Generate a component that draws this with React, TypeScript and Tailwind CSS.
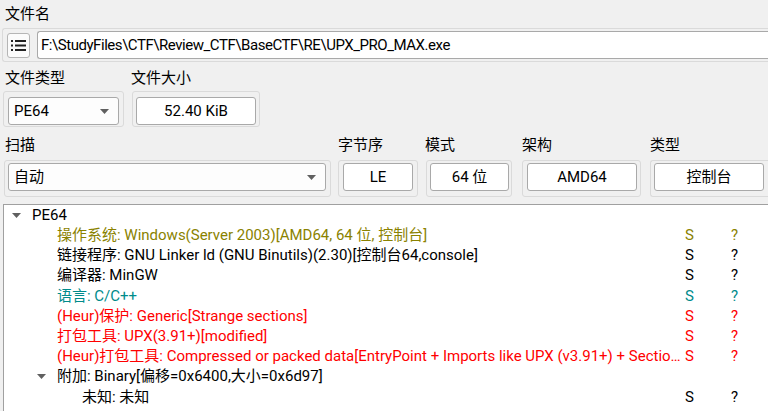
import type { ReactNode } from "react";

const FONT = "font-['Segoe_UI','Roboto','Noto_Sans_CJK_SC',sans-serif]";

function Caret({ className = "" }: { className?: string }) {
  return (
    <svg width="9" height="5" viewBox="0 0 9 5" className={className}>
      <path d="M0 0 L9 0 L4.5 5 Z" fill="#606060" />
    </svg>
  );
}

function Group({ className = "", children }: { className?: string; children: ReactNode }) {
  return (
    <div className={`flex border border-[#dadada] rounded-[3px] shrink-0 ${className}`}>{children}</div>
  );
}

function Field({ className = "", children }: { className?: string; children: ReactNode }) {
  return (
    <div
      className={`flex items-center justify-center bg-white border border-[#a9a9a9] rounded-[3px] h-[28px] text-[15px] text-black ${className}`}
    >
      {children}
    </div>
  );
}

function Combo({ className = "", value }: { className?: string; value: string }) {
  return (
    <div
      className={`flex items-center justify-between bg-[#fdfdfd] border border-[#a9a9a9] rounded-[3px] h-[28px] pl-[5px] pr-[9px] text-[15px] text-black ${className}`}
    >
      <span>{value}</span>
      <Caret />
    </div>
  );
}

type Item = {
  level: 0 | 1 | 2;
  text: string;
  color: string;
  arrow?: boolean;
  flags?: boolean;
};

// the long packer line is shown clipped, as the tree view elides it
const items: Item[] = [
  { level: 0, text: "PE64", color: "text-black", arrow: true },
  { level: 1, text: "操作系统: Windows(Server 2003)[AMD64, 64 位, 控制台]", color: "text-[#8a8200]", flags: true },
  { level: 1, text: "链接程序: GNU Linker ld (GNU Binutils)(2.30)[控制台64,console]", color: "text-black", flags: true },
  { level: 1, text: "编译器: MinGW", color: "text-black", flags: true },
  { level: 1, text: "语言: C/C++", color: "text-[#008b8b]", flags: true },
  { level: 1, text: "(Heur)保护: Generic[Strange sections]", color: "text-[#ff0000]", flags: true },
  { level: 1, text: "打包工具: UPX(3.91+)[modified]", color: "text-[#ff0000]", flags: true },
  {
    level: 1,
    text: "(Heur)打包工具: Compressed or packed data[EntryPoint + Imports like UPX (v3.91+) + Sectio…",
    color: "text-[#ff0000]",
    flags: true,
  },
  { level: 1, text: "附加: Binary[偏移=0x6400,大小=0x6d97]", color: "text-black", arrow: true },
  { level: 2, text: "未知: 未知", color: "text-black", flags: true },
];

const indent = ["pl-0", "pl-[25px]", "pl-[50px]"];

function TreeRow({ item }: { item: Item }) {
  return (
    <div className={`flex h-[20.2px] items-center text-[15px] ${item.color}`}>
      <div className={`flex items-center w-[677px] shrink-0 overflow-hidden ${indent[item.level]}`}>
        <span className="w-[25px] shrink-0 flex justify-center">
          {item.arrow && <Caret />}
        </span>
        <span className="ml-[3px] whitespace-nowrap">{item.text}</span>
      </div>
      {item.flags && (
        <>
          <span className="w-[46px] pl-[4px] shrink-0">S</span>
          <span className="pl-[4px]">?</span>
        </>
      )}
    </div>
  );
}

export default function App() {
  return (
    <div className={`w-[768px] h-[411px] overflow-hidden bg-[#f0f0f0] text-black ${FONT}`}>
      <div className="pl-[5px] pt-[4px] h-[24px] leading-[20px] text-[15px]">文件名</div>

      <Group className="mt-[4px] ml-[2px] h-[34px] items-center pl-[4px] gap-[7px] rounded-r-none border-r-0">
        <button className="flex items-center justify-center w-[23px] h-[25px] bg-[#fbfbfb] border border-[#b5b5b5] rounded-[3px]">
          <svg width="15" height="11" viewBox="0 0 15 11">
            <rect x="0" y="0" width="2" height="2" fill="#222" />
            <rect x="0" y="4.5" width="2" height="2" fill="#222" />
            <rect x="0" y="9" width="2" height="2" fill="#222" />
            <rect x="4" y="0" width="11" height="2" fill="#222" />
            <rect x="4" y="4.5" width="11" height="2" fill="#222" />
            <rect x="4" y="9" width="11" height="2" fill="#222" />
          </svg>
        </button>
        <Field className="flex-1 justify-start pl-[3px] rounded-r-none border-r-0 tracking-[-0.45px]">
          F:\StudyFiles\CTF\Review_CTF\BaseCTF\RE\UPX_PRO_MAX.exe
        </Field>
      </Group>

      <div className="flex mt-[2px] h-[24px] items-end text-[15px] leading-[20px]">
        <span className="pl-[5px] w-[131px]">文件类型</span>
        <span>文件大小</span>
      </div>

      <div className="flex mt-[3px] pl-[3px] gap-[8px]">
        <Group className="w-[121px] h-[36px] pl-[4px] pt-[5px]">
          <Combo className="w-[111px]" value="PE64" />
        </Group>
        <Group className="w-[128px] h-[36px] pl-[3px] pt-[5px]">
          <Field className="w-[120px]">52.40 KiB</Field>
        </Group>
      </div>

      <div className="flex mt-[4px] h-[24px] items-end text-[15px] leading-[20px]">
        <span className="pl-[5px] w-[338px]">扫描</span>
        <span className="w-[87px]">字节序</span>
        <span className="w-[97px]">模式</span>
        <span className="w-[128px]">架构</span>
        <span>类型</span>
      </div>

      <div className="flex mt-[5px] pl-[4px] h-[37px]">
        <Group className="w-[327px] h-[37px] pl-[3px] pt-[2px]">
          <Combo className="w-[318px]" value="自动" />
        </Group>
        <Group className="ml-[7px] w-[80px] h-[37px] pl-[4px] pt-[2px]">
          <Field className="w-[70px]">LE</Field>
        </Group>
        <Group className="ml-[8px] w-[86px] h-[37px] pl-[3px] pt-[2px]">
          <Field className="w-[79px]">64 位</Field>
        </Group>
        <Group className="ml-[10px] w-[119px] h-[37px] pl-[4px] pt-[2px]">
          <Field className="w-[110px]">AMD64</Field>
        </Group>
        <Group className="ml-[9px] w-[118px] h-[37px] pl-[3px] pt-[2px] rounded-r-none border-r-0">
          <Field className="w-[110px]">控制台</Field>
        </Group>
      </div>

      <div className="mt-[7px] ml-[3px] h-[210px] bg-white border-t border-l border-[#a0a0a0]">
        {items.map((item, i) => (
          <TreeRow key={i} item={item} />
        ))}
      </div>
    </div>
  );
}
